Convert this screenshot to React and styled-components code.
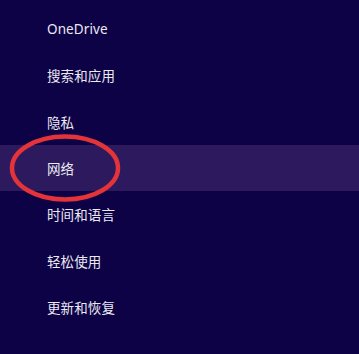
import React from 'react';
import styled, { createGlobalStyle } from 'styled-components';

const GlobalStyle = createGlobalStyle`
  html, body {
    margin: 0;
    padding: 0;
    background: #0d0245;
  }
`;

const Panel = styled.div`
  width: 359px;
  height: 354px;
  background-color: #0d0245;
  padding-top: 6px;
  box-sizing: border-box;
  display: flex;
  flex-direction: column;
  overflow: hidden;
`;

const Item = styled.div`
  position: relative;
  height: 46.33px;
  flex-shrink: 0;
  display: flex;
  align-items: center;
  padding-left: 47px;
  background-color: ${(p) => (p.$active ? '#2d1a5e' : 'transparent')};
  color: #ebe9f3;
  font-family: "Noto Sans", "Noto Sans CJK SC", sans-serif;
  font-size: 13.5px;
  letter-spacing: 0.1px;
`;

const Circle = styled.svg`
  position: absolute;
  left: 8px;
  top: -12px;
  width: 114px;
  height: 70px;
  pointer-events: none;
`;

const items = ['OneDrive', '搜索和应用', '隐私', '网络', '时间和语言', '轻松使用', '更新和恢复'];

const App = () => {
  return (
    <>
      <GlobalStyle />
      <Panel>
        {items.map((label) => (
          <Item key={label} $active={label === '网络'}>
            {label}
            {label === '网络' && (
              <Circle viewBox="0 0 114 70">
                <ellipse cx="57" cy="35" rx="53" ry="31.5" fill="none" stroke="#e5333a" strokeWidth="4.5" />
              </Circle>
            )}
          </Item>
        ))}
      </Panel>
    </>
  );
};

export default App;
